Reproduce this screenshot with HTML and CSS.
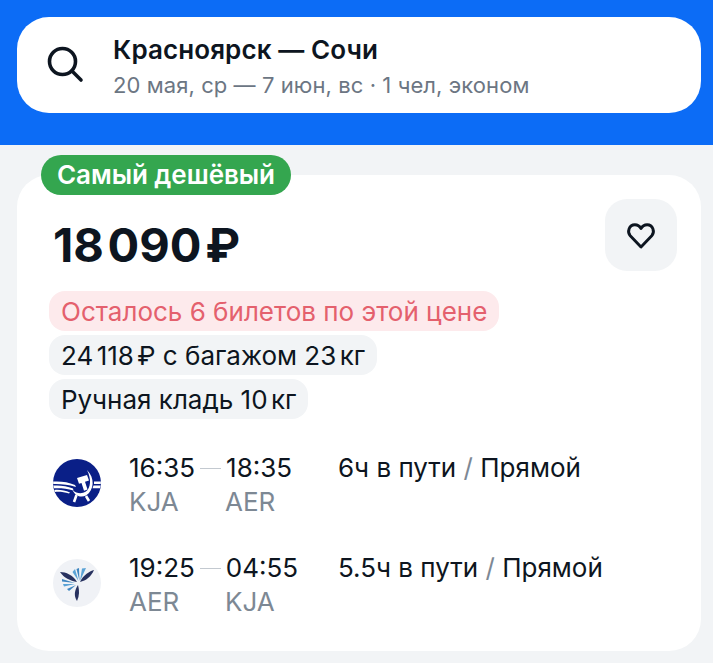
FILE: index.html
```html
<!DOCTYPE html>
<html lang="ru">
<head>
    <meta charset="UTF-8">
    <title>Красноярск — Сочи</title>
    <link rel="stylesheet" href="styles.css">
</head>
<body>
    <header class="top">
        <div class="search">
            <svg class="search-icon" width="40" height="40" viewBox="0 0 40 40" fill="none" stroke="#0d1520" stroke-width="3.6">
                <circle cx="15.5" cy="16.5" r="13"/>
                <path d="M25 26 L34 35" stroke-linecap="round"/>
            </svg>
            <div>
                <div class="route">Красноярск — Сочи</div>
                <div class="dates">20 мая, ср — 7 июн, вс · 1 чел, эконом</div>
            </div>
        </div>
    </header>

    <main class="offer">
        <div class="badge">Самый дешёвый</div>
        <div class="card">
            <div class="price-row">
                <div class="price">18&#8202;090&#8202;₽</div>
                <button class="fav">
                    <svg width="32" height="32" viewBox="0 0 28 28" fill="none" stroke="#0d1520" stroke-width="2.5" stroke-linejoin="round">
                        <path d="M14 24.5 L4.6 14.6 C1.6 11.2 3.6 5 8.6 5 C11 5 12.9 6.3 14 8.4 C15.1 6.3 17 5 19.4 5 C24.4 5 26.4 11.2 23.4 14.6 Z"/>
                    </svg>
                </button>
            </div>

            <div class="tags">
                <span class="tag tag-red">Осталось 6 билетов по этой цене</span>
                <span class="tag">24<span class="thin"></span>118<span class="thin"></span>₽ с багажом 23<span class="thin"></span>кг</span>
                <span class="tag">Ручная кладь 10<span class="thin"></span>кг</span>
            </div>

            <div class="flights">
                <div class="flight">
                    <svg class="logo" width="48" height="48" viewBox="0 0 48 48">
                        <circle cx="24" cy="24" r="24" fill="#0a1f87"/>
                        <!-- wings -->
                        <path d="M0.1 22.5 C8 22 15 23 22 26 L23 28 C15 25.5 8 24.8 0.2 25 Z" fill="#fff"/>
                        <path d="M0.4 26.5 C7 26 14 27 20 29.5 L20.5 31.5 C14 29.5 7 29 0.9 29.3 Z" fill="#fff"/>
                        <path d="M1.4 31 C7 30.5 12 31.5 17 33.5 L16 34.5 C11 33 6 32.5 2 33 Z" fill="#fff"/>
                        <path d="M41 22.5 H47.9 L47.8 25 H41 Z M40.5 26.5 H47.6 L47.1 29.3 H39.5 Z" fill="#fff"/>
                        <!-- sickle -->
                        <path d="M34 11 C42 19 41.5 31 33 36.5 C28 39 22 37 19.5 31 C23.5 34.8 29 35 32.5 32.8 C38 29 38.5 20 34 11 Z" fill="#fff"/>
                        <!-- hammer -->
                        <path d="M24 19 L34 16 L36 21.5 L32 22.8 L34.5 30.5 L31 31.7 L28.5 24 L26 24.8 Z" fill="#fff"/>
                        <!-- struts -->
                        <path d="M23.5 36 L21 43 M33 37 L36 42" stroke="#fff" stroke-width="2.6" fill="none"/>
                    </svg>
                    <div class="times">
                        <div class="time-top">
                            <span class="time">16:35</span>
                            <span class="dash"></span>
                            <span class="time">18:35</span>
                        </div>
                        <div class="codes"><span class="code">KJA</span><span class="code">AER</span></div>
                    </div>
                    <div class="info">6ч в пути <span class="slash">/</span> Прямой</div>
                </div>

                <div class="flight">
                    <svg class="logo" width="48" height="48" viewBox="0 0 48 48">
                        <circle cx="24" cy="24" r="24" fill="#f0f2f6"/>
                        <!-- dark blades -->
                        <path d="M7 13 C13 13 20 16 24 23 C17 21.5 11 19 7 13 Z" fill="#27315f"/>
                        <path d="M41 11 C37 12 30 16 27 23 C33 21.5 38 18 41 11 Z" fill="#27315f"/>
                        <path d="M24 42 C20.5 37 21.5 31 25 26 C26.5 31 26.5 37 24 42 Z" fill="#27315f"/>
                        <!-- blue blades -->
                        <path d="M22 10 L25.5 22 L19.5 13 Z" fill="#5ba3d6"/>
                        <path d="M26 9 L26.5 22 L23.5 10 Z" fill="#3f86c0"/>
                        <path d="M33 9 L27 22 L29 9.5 Z" fill="#5ba3d6"/>
                        <path d="M9 20 L22 24 L9 22.5 Z" fill="#3f86c0"/>
                        <path d="M10 25 L22 25 L11 27.5 Z" fill="#5ba3d6"/>
                        <path d="M14 30 L23 26 L16 32 Z" fill="#3f86c0"/>
                    </svg>
                    <div class="times">
                        <div class="time-top">
                            <span class="time">19:25</span>
                            <span class="dash"></span>
                            <span class="time">04:55</span>
                        </div>
                        <div class="codes"><span class="code">AER</span><span class="code">KJA</span></div>
                    </div>
                    <div class="info">5.5ч в пути <span class="slash">/</span> Прямой</div>
                </div>
            </div>
        </div>
    </main>
</body>
</html>
```

FILE: styles.css
```css
* {
    box-sizing: border-box;
}
body {
    margin: 0;
    height: 663px;
    overflow: hidden;
    background-color: #f2f4f6;
    font-family: Inter, "Noto Sans", sans-serif;
    color: #0d1520;
}
.top {
    height: 145px;
    padding: 17px 12px 0 17px;
    background-color: #0c6cf6;
}
.search {
    display: flex;
    align-items: center;
    height: 96px;
    padding-left: 30px;
    background-color: white;
    border-radius: 32px;
}
.search-icon {
    margin-right: 26px;
    flex-shrink: 0;
}
.route {
    margin-top: 3px;
    font-size: 26px;
    line-height: 32px;
    font-weight: 600;
    letter-spacing: 0.1px;
}
.dates {
    margin-top: 5px;
    font-size: 22px;
    line-height: 28px;
    letter-spacing: 0.08px;
    color: #6c7683;
}
.offer {
    position: relative;
    padding: 30px 12px 0 17px;
}
.badge {
    position: absolute;
    left: 41px;
    top: 10px;
    height: 40px;
    padding: 0 16px 0 16px;
    border-radius: 20px;
    background-color: #34a64f;
    color: white;
    font-size: 26px;
    line-height: 40px;
    font-weight: 600;
    letter-spacing: -0.05px;
}
.card {
    height: 476px;
    padding: 24px 24px 0 32px;
    background-color: white;
    border-radius: 32px;
}
.price-row {
    display: flex;
    justify-content: space-between;
    align-items: flex-start;
    height: 92px;
}
.price {
    margin: 18px 0 0 4px;
    font-size: 47px;
    line-height: 56px;
    font-weight: 700;
}
.fav {
    display: flex;
    align-items: center;
    justify-content: center;
    width: 72px;
    height: 72px;
    padding: 0;
    border: none;
    border-radius: 22px;
    background-color: #f2f4f6;
}
.tags {
    display: flex;
    flex-direction: column;
    align-items: flex-start;
    gap: 4px;
}
.tag {
    height: 40px;
    padding: 0 12px;
    border-radius: 16px;
    background-color: #f2f4f6;
    font-size: 26px;
    line-height: 42px;
}
.thin {
    display: inline-block;
    width: 3.4px;
}
.tag-red {
    background-color: #fdeaec;
    color: #e4606d;
}
.flights {
    margin-top: 33px;
    display: flex;
    flex-direction: column;
    gap: 34px;
}
.flight {
    display: flex;
    align-items: flex-start;
    padding-left: 4px;
}
.logo {
    margin-top: 7px;
    flex-shrink: 0;
}
.times {
    width: 209px;
    margin-left: 28px;
}
.time-top {
    display: flex;
    align-items: center;
    font-size: 26px;
    line-height: 32px;
}
.dash {
    width: 21px;
    height: 1px;
    margin: 0 5px;
    background-color: #c3c9d0;
}
.codes {
    display: flex;
    margin-top: 2px;
    font-size: 26px;
    line-height: 32px;
    color: #7d8894;
}
.code {
    width: 96px;
}
.info {
    font-size: 26px;
    line-height: 32px;
}
.slash {
    color: #7d8894;
}
```
